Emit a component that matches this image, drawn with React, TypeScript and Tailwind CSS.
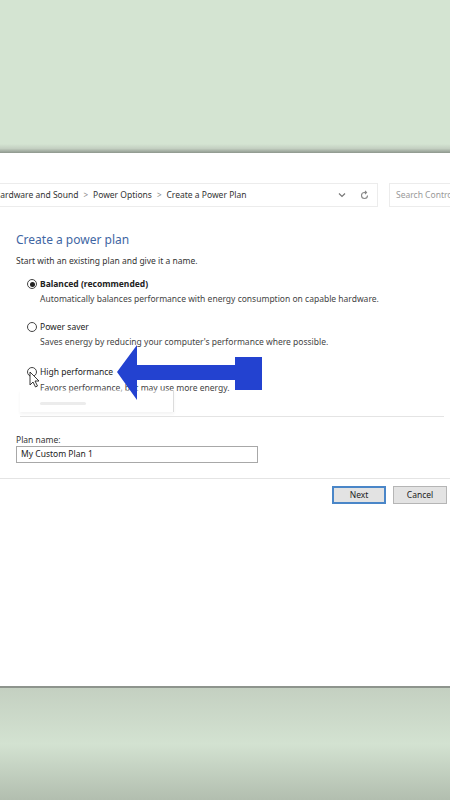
import React from "react";

const font = { fontFamily: '"Noto Sans", "Open Sans", sans-serif' };

const Radio = ({ checked }: { checked?: boolean }) => (
  <span className="w-[10px] h-[10px] rounded-full border border-[#444] bg-white flex items-center justify-center shrink-0">
    {checked && <span className="w-[5px] h-[5px] rounded-full bg-[#222]" />}
  </span>
);

const Chevron = () => <span className="text-[#888] text-[8px] px-[5px]">&gt;</span>;

const App = () => {
  return (
    <div className="relative w-[450px] h-[800px] overflow-hidden flex flex-col bg-white" style={font}>
      {/* desktop above the window */}
      <div className="h-[144px] bg-[#d4e4d2] shrink-0" />
      <div className="h-[9px] bg-gradient-to-b from-[#d4e4d2] via-[#c3cfc1] to-[#8e978d] shrink-0" />

      {/* window */}
      <div className="relative flex-1 bg-white flex flex-col">
        {/* address bar */}
        <div className="mt-[30px] h-[24px] flex items-center">
          <div className="w-[378px] h-full border-y border-r border-[#ececec] flex items-center overflow-hidden text-[8.5px] text-[#333] whitespace-nowrap">
            <span className="ml-[-6px]">Hardware and Sound</span>
            <Chevron />
            <span>Power Options</span>
            <Chevron />
            <span>Create a Power Plan</span>
            <span className="ml-auto flex items-center gap-[14px] pr-[8px] text-[#666]">
              <svg width="8" height="6" viewBox="0 0 8 6" fill="none" stroke="#777" strokeWidth="1.2">
                <path d="M1 1.5l3 3 3-3" />
              </svg>
              <svg width="9" height="10" viewBox="0 0 9 10" fill="none" stroke="#888" strokeWidth="1.1">
                <path d="M7.5 5.5a3 3 0 1 1-3-3h1.5" />
                <path d="M5 1l1.5 1.5L5 4" />
              </svg>
            </span>
          </div>
          <div className="ml-[11px] flex-1 h-full border-y border-l border-[#ececec] flex items-center pl-[6px] text-[8.5px] text-[#999] whitespace-nowrap overflow-hidden">
            Search Control Panel
          </div>
        </div>

        {/* content */}
        <div className="px-[16px] flex flex-col">
          <div className="mt-[25px] h-[16px] leading-[16px] text-[12px] text-[#3f66a3]">Create a power plan</div>
          <div className="mt-[7px] h-[12px] leading-[12px] text-[8.5px] text-[#333]">
            Start with an existing plan and give it a name.
          </div>

          <div className="mt-[11px] h-[12px] flex items-center gap-[3px] pl-[11px]">
            <Radio checked />
            <span className="text-[8.5px] font-bold text-[#222] leading-[12px]">Balanced (recommended)</span>
          </div>
          <div className="mt-[3px] h-[12px] leading-[12px] pl-[24px] text-[8.5px] text-[#444]">
            Automatically balances performance with energy consumption on capable hardware.
          </div>

          <div className="mt-[16px] h-[12px] flex items-center gap-[3px] pl-[11px]">
            <Radio />
            <span className="text-[8.5px] text-[#222] leading-[12px]">Power saver</span>
          </div>
          <div className="mt-[3px] h-[12px] leading-[12px] pl-[24px] text-[8.5px] text-[#444]">
            Saves energy by reducing your computer&apos;s performance where possible.
          </div>

          <div className="mt-[18px] h-[12px] flex items-center gap-[3px] pl-[11px]">
            <Radio />
            <span className="text-[8.5px] text-[#222] leading-[12px]">High performance</span>
          </div>
          <div className="relative mt-[4px] h-[12px] leading-[12px] pl-[24px] text-[8.5px] text-[#444]">
            Favors performance, but may use more energy.
            {/* faint dropdown ghost */}
            <div className="absolute left-[4px] top-[8px] w-[154px] h-[22px] border-r border-[#dcdcdc] bg-white/50 shadow-[0_2px_3px_rgba(0,0,0,0.05)]">
              <div className="mt-[12px] ml-[20px] w-[46px] h-[3px] bg-[#ececec] rounded" />
            </div>
          </div>

          <div className="mt-[22px] h-[1px] ml-[4px] mr-[-10px] bg-[#e4e4e4]" />

          <div className="mt-[17px] h-[12px] leading-[12px] text-[8.5px] text-[#333]">Plan name:</div>
          <div className="w-[242px] h-[17px] border border-[#a8a8a8] flex items-center pl-[4px] text-[8.5px] text-[#222]">
            My Custom Plan 1
          </div>
        </div>

        <div className="mt-[15px] h-[1px] bg-[#e4e4e4]" />

        <div className="mt-[7px] flex justify-end gap-[7px] pr-[3px]">
          <div className="w-[54px] h-[18px] border-2 border-[#4a86c8] bg-[#e3e3e3] flex items-center justify-center text-[8.5px] text-[#222]">
            Next
          </div>
          <div className="w-[54px] h-[18px] border border-[#b5b5b5] bg-[#e3e3e3] flex items-center justify-center text-[8.5px] text-[#222]">
            Cancel
          </div>
        </div>
      </div>

      {/* desktop below the window */}
      <div className="h-[2px] bg-[#8e948d] shrink-0" />
      <div className="h-[112px] bg-gradient-to-b from-[#c4d0c1] via-[#d3e2d1] to-[#b2beaf] shrink-0" />

      {/* annotation arrow and cursor */}
      <svg className="absolute left-0 top-0 pointer-events-none" width="450" height="800" viewBox="0 0 450 800">
        <polygon
          points="117,372 137,345 137,365 235,365 235,357 262,357 262,390 235,390 235,380 137,380 137,400"
          fill="#2342d0"
        />
        <path d="M30 372 L30 385 L33 382 L35.5 387 L37.5 386 L35 381 L39 381 Z" fill="#fff" stroke="#222" strokeWidth="0.9" />
      </svg>
    </div>
  );
};

export default App;
